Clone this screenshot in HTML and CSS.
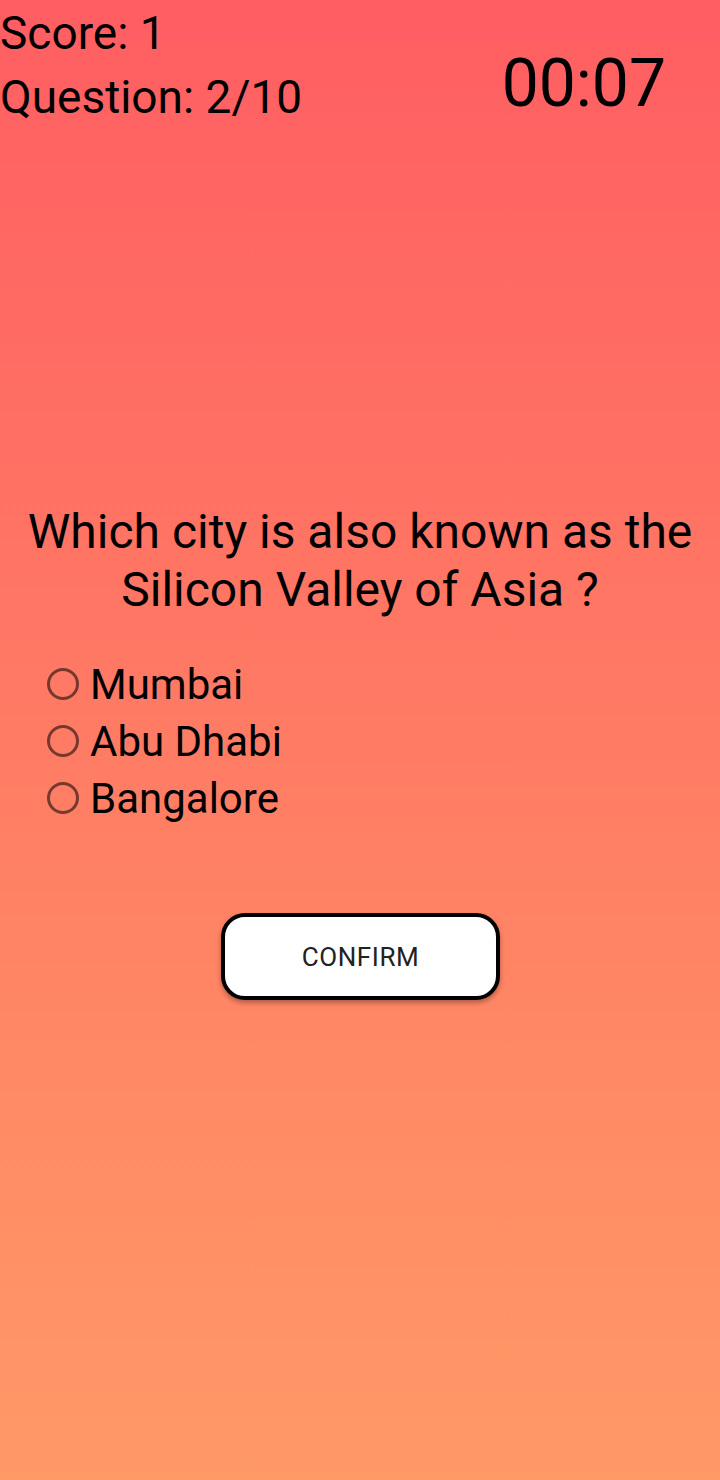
FILE: index.html
```html
<!DOCTYPE html>
<html>
<head>
<meta charset="utf-8">
<link rel="stylesheet" href="styles.css">
</head>
<body>
<div class="screen">
  <header class="top">
    <div class="stats">
      <div class="stat">Score: 1</div>
      <div class="stat">Question: 2/10</div>
    </div>
    <div class="timer">00:07</div>
  </header>
  <main class="quiz">
    <h1 class="question">Which city is also known as the Silicon Valley of Asia ?</h1>
    <div class="options">
      <label class="option"><span class="radio"></span><span class="opt-text">Mumbai</span></label>
      <label class="option"><span class="radio"></span><span class="opt-text">Abu Dhabi</span></label>
      <label class="option"><span class="radio"></span><span class="opt-text">Bangalore</span></label>
    </div>
    <div class="actions">
      <button class="confirm">CONFIRM</button>
    </div>
  </main>
</div>
</body>
</html>
```
FILE: styles.css
```css
* { box-sizing: border-box; }
html, body { margin: 0; padding: 0; }
body {
  width: 720px;
  height: 1480px;
  font-family: Roboto, "Liberation Sans", sans-serif;
  color: #000;
  background: linear-gradient(180deg, #ff5e62 0%, #ff9966 100%);
  overflow: hidden;
}
.screen { width: 720px; height: 1480px; }
.top {
  display: flex;
  justify-content: space-between;
  align-items: flex-start;
  padding: 3px 54px 0 0;
}
.stats {
  display: flex;
  flex-direction: column;
  gap: 3px;
}
.stat {
  font-size: 46px;
  line-height: 61px;
  white-space: nowrap;
}
.timer {
  font-size: 66px;
  margin-top: 42px;
  line-height: normal;
}
.quiz { padding-top: 375px; }
.question {
  margin: 0;
  font-weight: 400;
  font-size: 48px;
  line-height: 58px;
  text-align: center;
  padding: 0 20px;
}
.options {
  display: flex;
  flex-direction: column;
  padding: 37px 0 0 47px;
}
.option {
  display: flex;
  align-items: center;
  gap: 11px;
  font-size: 42px;
  line-height: 57px;
  height: 57px;
}
.radio {
  width: 32px;
  height: 32px;
  border: 3px solid rgba(0,0,0,0.54);
  border-radius: 50%;
  flex: none;
  margin-top: -2px;
}
.actions {
  display: flex;
  justify-content: center;
  padding-top: 86px;
}
.confirm {
  width: 279px;
  height: 87px;
  background: #fff;
  border: 4px solid #000;
  border-radius: 24px;
  font-family: Roboto, "Liberation Sans", sans-serif;
  font-weight: 400;
  font-size: 26px;
  color: #222;
  letter-spacing: 0.6px;
  box-shadow: 0 3px 5px rgba(0,0,0,0.3);
  margin-left: 1px;
}
```
